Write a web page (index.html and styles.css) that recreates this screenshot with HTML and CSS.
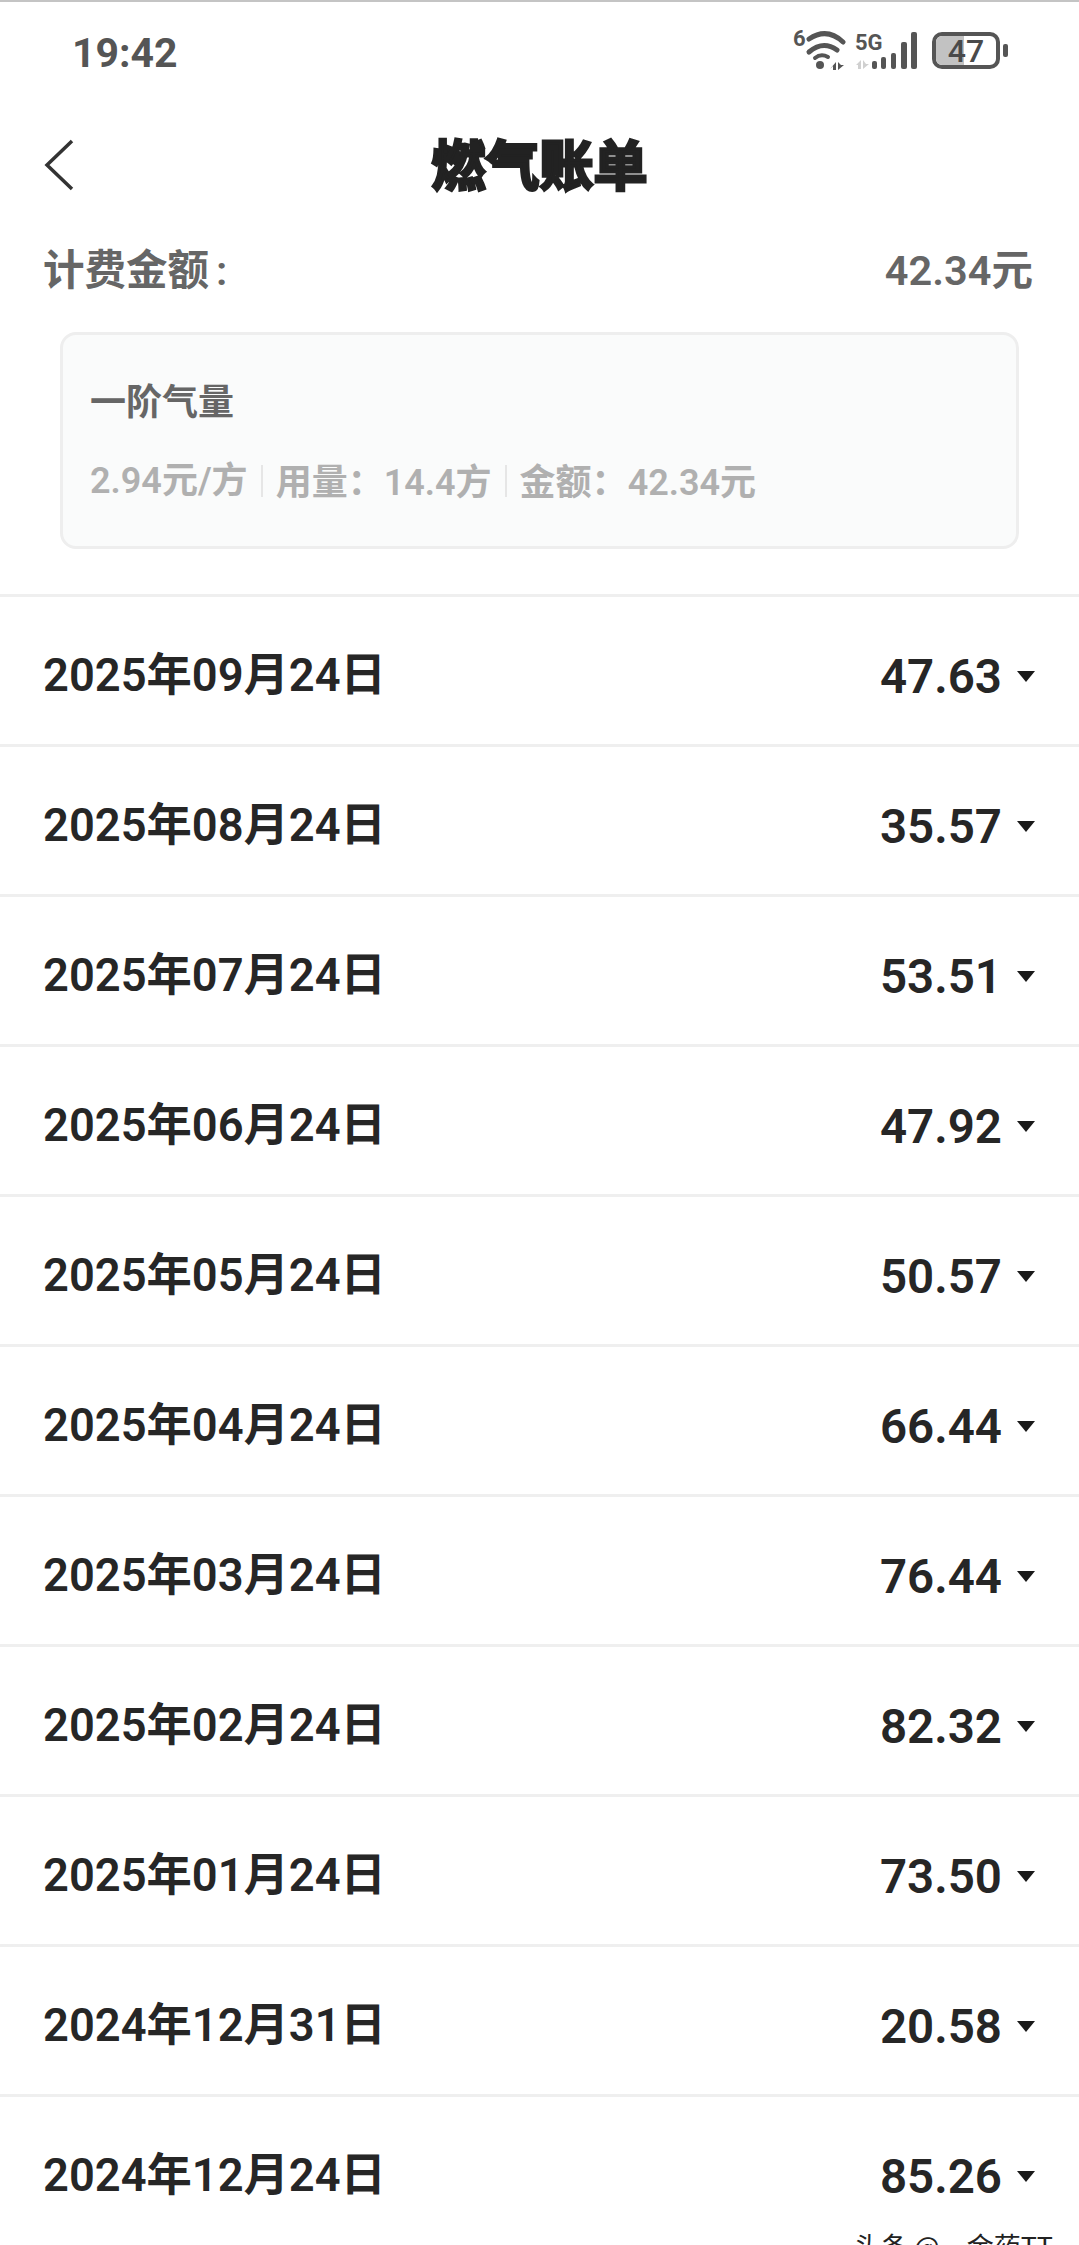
FILE: index.html
```html
<!DOCTYPE html>
<html lang="zh-CN">
<head>
  <meta charset="UTF-8" />
  <meta name="viewport" content="width=device-width, initial-scale=1" />
  <title>燃气账单</title>
  <link rel="stylesheet" href="styles.css">
</head>
<body>

  <!-- Status bar -->
  <div class="status-bar">
    <span class="clock">19:42</span>
    <div class="status-icons">
      <svg class="icon-network" width="130" height="46" viewBox="0 0 130 46">
        <!-- wifi -->
        <text x="2" y="20" class="net-label">6</text>
        <g fill="none" stroke="#555" stroke-linecap="round" stroke-width="5">
          <path d="M18 13 Q36 1 52 16" />
          <path d="M18 26 Q32 14 46 24" />
          <path d="M24 32 Q30 27 37 31" stroke-width="4" />
        </g>
        <circle cx="29" cy="39" r="4" fill="#555" />
        <path d="M45 36 V44 H42 V40 L39 43 Z M47 36 V44 L53 39 H50 Z" fill="#555" />
        <!-- mobile signal -->
        <text x="64" y="24" class="net-label">5G</text>
        <path d="M65 39 L70 34 V43 H67 V39 Z M72 34 V43 L78 38 H75 Z" fill="#d0d0d0" />
        <rect x="81" y="35" width="5" height="8" rx="2" fill="#555" />
        <rect x="90" y="31" width="5" height="12" rx="2" fill="#555" />
        <rect x="100" y="27" width="5" height="16" rx="2" fill="#555" />
        <rect x="110" y="16" width="6" height="27" rx="2" fill="#555" />
        <rect x="120" y="6" width="6" height="37" rx="2" fill="#555" />
      </svg>
      <div class="battery">
        <div class="battery-body">
          <div class="battery-level"></div>
          <span class="battery-text">47</span>
        </div>
        <div class="battery-cap"></div>
      </div>
    </div>
  </div>

  <!-- Title bar -->
  <div class="nav-bar">
    <svg class="back" width="32" height="54" viewBox="0 0 32 54">
      <path d="M29 3 L4 27 L29 51" fill="none" stroke="#333" stroke-width="3.5" />
    </svg>
    <h1>燃气账单</h1>
  </div>

  <div class="fee-row">
    <span class="fee-label">计费金额<span class="fee-colon">:</span></span>
    <span class="fee-value">42.34元</span>
  </div>

  <div class="tier-card">
    <div class="tier-name">一阶气量</div>
    <div class="tier-detail">
      <span>2.94元/方</span>
      <i class="sep"></i>
      <span>用量<span class="colon">&#xFF1A;</span>14.4方</span>
      <i class="sep"></i>
      <span>金额<span class="colon">&#xFF1A;</span>42.34元</span>
    </div>
  </div>

  <!-- Monthly bills -->
  <ul class="bills">
    <li class="bill"><span class="bill-date">2025年09月24日</span><span class="bill-amount">47.63<i class="caret"></i></span></li>
    <li class="bill"><span class="bill-date">2025年08月24日</span><span class="bill-amount">35.57<i class="caret"></i></span></li>
    <li class="bill"><span class="bill-date">2025年07月24日</span><span class="bill-amount">53.51<i class="caret"></i></span></li>
    <li class="bill"><span class="bill-date">2025年06月24日</span><span class="bill-amount">47.92<i class="caret"></i></span></li>
    <li class="bill"><span class="bill-date">2025年05月24日</span><span class="bill-amount">50.57<i class="caret"></i></span></li>
    <li class="bill"><span class="bill-date">2025年04月24日</span><span class="bill-amount">66.44<i class="caret"></i></span></li>
    <li class="bill"><span class="bill-date">2025年03月24日</span><span class="bill-amount">76.44<i class="caret"></i></span></li>
    <li class="bill"><span class="bill-date">2025年02月24日</span><span class="bill-amount">82.32<i class="caret"></i></span></li>
    <li class="bill"><span class="bill-date">2025年01月24日</span><span class="bill-amount">73.50<i class="caret"></i></span></li>
    <li class="bill"><span class="bill-date">2024年12月31日</span><span class="bill-amount">20.58<i class="caret"></i></span></li>
    <li class="bill"><span class="bill-date">2024年12月24日</span><span class="bill-amount">85.26<i class="caret"></i></span></li>
  </ul>

  <div class="watermark">头条 @一金药TT</div>

</body>
</html>
```

FILE: styles.css
```css
* {
  box-sizing: border-box;
}

body {
  margin: 0;
  height: 2245px;
  overflow: hidden;
  position: relative;
  background: #fff;
  border-top: 2px solid #c4c4c4;
  font-family: "Roboto", "Noto Sans CJK SC", sans-serif;
  color: #262626;
}

/* ----- status bar ----- */
.status-bar {
  height: 96px;
  padding: 27px 71px 0 72px;
  display: flex;
  justify-content: space-between;
  align-items: flex-start;
}

.clock {
  font-size: 41px;
  font-weight: 700;
  line-height: 48px;
  color: #555;
}

.status-icons {
  display: flex;
  align-items: flex-start;
  margin-top: -3px;
}

.net-label {
  font-family: "Roboto", sans-serif;
  font-size: 22px;
  font-weight: 700;
  fill: #555;
}

.battery {
  display: flex;
  align-items: center;
  margin-left: 11px;
  margin-top: 6px;
}

.battery-body {
  position: relative;
  width: 68px;
  height: 37px;
  border: 4px solid #555;
  border-radius: 10px;
  overflow: hidden;
  display: flex;
  align-items: center;
  justify-content: center;
}

.battery-level {
  position: absolute;
  left: 0;
  top: 0;
  bottom: 0;
  width: 47%;
  background: #c2c2c2;
}

.battery-text {
  position: relative;
  font-size: 32px;
  font-weight: 500;
  line-height: 1;
  color: #4a4a4a;
}

.battery-cap {
  width: 5px;
  height: 13px;
  margin-left: 3px;
  background: #555;
  border-radius: 2px;
}

/* ----- title bar ----- */
.nav-bar {
  position: relative;
  height: 130px;
  display: flex;
  align-items: center;
  justify-content: center;
}

.back {
  position: absolute;
  left: 43px;
  top: 40px;
}

.nav-bar h1 {
  margin: 0;
  font-size: 54px;
  font-weight: 700;
  line-height: 64px;
  color: #222;
  font-family: "Noto Sans CJK SC", sans-serif;
  -webkit-text-stroke: 3px #222;
}

/* ----- fee summary ----- */
.fee-row {
  display: flex;
  justify-content: space-between;
  align-items: center;
  padding: 0 46px 0 43px;
  height: 56px;
  margin-top: 11px;
  font-size: 41.5px;
  font-weight: 600;
  color: #666;
}

.fee-colon {
  margin-left: 7px;
}

.tier-card {
  width: 959px;
  height: 217px;
  margin: 37px 0 0 60px;
  padding: 46px 28px 0 27px;
  background: #fafbfb;
  border: 3px solid #eeeeee;
  border-radius: 16px;
}

.tier-name {
  font-size: 36px;
  font-weight: 600;
  line-height: 44px;
  color: #666;
}

.tier-detail {
  display: flex;
  align-items: center;
  margin-top: 32px;
  font-size: 36px;
  font-weight: 600;
  line-height: 44px;
  color: #b0b0b0;
}

.colon {
  font-family: "Noto Sans CJK TC", sans-serif;
}

.sep {
  width: 2px;
  height: 32px;
  margin: 0 13px;
  background: #e6e6e6;
}

/* ----- bill list ----- */
.bills {
  list-style: none;
  margin: 45px 0 0;
  padding: 0;
}

.bill {
  height: 150px;
  padding: 1px 44px 0 43px;
  border-top: 3px solid #efefef;
  display: flex;
  justify-content: space-between;
  align-items: center;
}

.bill-date {
  font-size: 45.3px;
  font-weight: 600;
}

.bill-amount {
  display: flex;
  align-items: center;
  padding-top: 11px;
  font-size: 47.5px;
  font-weight: 600;
}

.caret {
  width: 0;
  height: 0;
  margin: 0 0 0 15px;
  border-left: 9px solid transparent;
  border-right: 9px solid transparent;
  border-top: 11px solid #1a1a1a;
}

/* runs off the bottom edge of the page */
.watermark {
  position: absolute;
  right: 26px;
  top: 2226px;
  font-family: "Noto Sans CJK SC", sans-serif;
  font-size: 27px;
  line-height: 36px;
  color: #222;
}
```
